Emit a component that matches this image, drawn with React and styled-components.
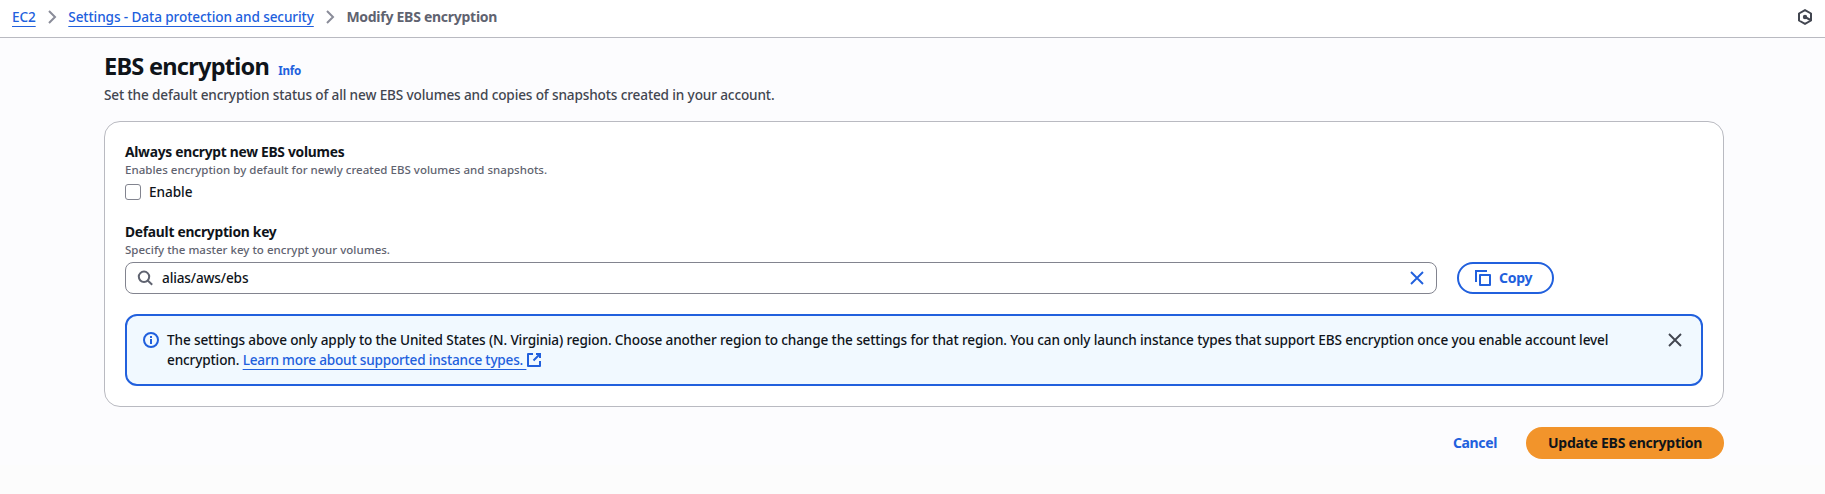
import React, { useState } from "react";
import styled, { createGlobalStyle } from "styled-components";

const color = {
  link: "#2160dd",
  text: "#0f141a",
  muted: "#5f6370",
  body: "#424650",
  line: "#b9bac1",
  control: "#82848f",
};

const GlobalStyle = createGlobalStyle`
  *, *::before, *::after { box-sizing: border-box; }
  body {
    margin: 0;
    background: #fcfcfc;
    color: ${color.text};
    font: 500 13.6px/20px "Noto Sans", "Open Sans", sans-serif;
    letter-spacing: -0.138px;
    overflow: hidden;
  }
  button, input { font: inherit; letter-spacing: inherit; color: inherit; }
`;

const TopBar = styled.header`
  height: 38px;
  padding: 7px 12px 0;
  display: flex;
  justify-content: space-between;
  background: #fff;
  border-bottom: 1px solid ${color.line};
`;

const Breadcrumbs = styled.nav`
  display: flex;
  height: 20px;
  white-space: nowrap;
`;

const Link = styled.a`
  color: ${color.link};
  text-decoration: underline 1px;
  text-underline-offset: 4px;
  text-decoration-skip-ink: none;
  letter-spacing: ${(p) => p.$track || "-0.1px"};
`;

const Separator = styled.svg`
  flex: none;
  width: 16px;
  height: 16px;
  margin: 2px 8.3px 0;
`;

const Current = styled.span`
  font-size: 14px;
  font-weight: 700;
  color: ${color.muted};
  letter-spacing: -0.27px;
`;

const IconButton = styled.button`
  flex: none;
  width: 16px;
  height: 16px;
  padding: 0;
  border: 0;
  background: none;
  display: flex;
  color: ${(p) => p.$color || color.body};
  margin-top: ${(p) => p.$top || "0"};
`;

const Main = styled.main`
  height: 427px;
  padding: 13px 101px 0 104px;
  background: #fcfcfe;
`;

const Heading = styled.div`
  display: flex;
  align-items: baseline;
  height: 30px;
  gap: 9px;
`;

const Title = styled.h1`
  margin: 0;
  font-size: 23.6px;
  line-height: 30px;
  font-weight: 700;
  letter-spacing: -0.77px;
`;

const Info = styled.a`
  font-size: 11.6px;
  line-height: 16px;
  font-weight: 700;
  letter-spacing: -0.2px;
  color: ${color.link};
`;

const Subtitle = styled.p`
  margin: 4px 0 16px;
  color: ${color.body};
`;

const Card = styled.section`
  height: 286px;
  padding: 20px;
  display: flex;
  flex-direction: column;
  gap: 20px;
  background: #fff;
  border: 1px solid ${color.line};
  border-radius: 16px;
`;

const Field = styled.div`
  display: flex;
  flex-direction: column;
`;

const Label = styled.div`
  font-size: 13.8px;
  font-weight: 700;
  letter-spacing: -0.27px;
`;

const Hint = styled.div`
  margin-bottom: 4px;
  font-size: 11.5px;
  line-height: 16px;
  letter-spacing: 0.02px;
  color: ${color.muted};
`;

const CheckRow = styled.label`
  display: flex;
  gap: 8px;
  letter-spacing: -0.05px;
`;

const Checkbox = styled.input`
  appearance: none;
  width: 16px;
  height: 16px;
  margin: 2px 0 0;
  background: #fff;
  border: 1px solid ${color.control};
  border-radius: 3px;
`;

const KeyRow = styled.div`
  display: flex;
  gap: 20px;
`;

const SearchBox = styled.div`
  width: 1312px;
  height: 32px;
  padding: 0 11px;
  display: flex;
  align-items: center;
  gap: 9px;
  border: 1px solid ${color.control};
  border-radius: 8px;
`;

const SearchInput = styled.input`
  flex: 1;
  height: 20px;
  padding: 0;
  border: 0;
  outline: 0;
  background: none;
`;

const Button = styled.button`
  height: 32px;
  width: ${(p) => p.$width};
  padding: ${(p) => p.$pad || "0"};
  display: flex;
  align-items: center;
  justify-content: ${(p) => (p.$pad ? "flex-start" : "center")};
  gap: 8px;
  font-size: 14px;
  font-weight: 700;
  white-space: nowrap;
  border-radius: 20px;
  letter-spacing: ${(p) => p.$track || "-0.3px"};
  border: 2px solid ${(p) => (p.$kind === "normal" ? color.link : "transparent")};
  color: ${(p) => (p.$kind === "primary" ? color.text : color.link)};
  background: ${(p) => (p.$kind === "primary" ? "#f2942b" : "transparent")};
`;

const Alert = styled.div`
  height: 72px;
  padding: 14px 18px 14px 16px;
  display: flex;
  gap: 8px;
  background: #f1f9ff;
  border: 2px solid ${color.link};
  border-radius: 12px;
`;

const AlertIcon = styled.svg`
  flex: none;
  width: 16px;
  height: 16px;
  margin-top: 2px;
`;

const AlertText = styled.div`
  flex: 1;
`;

const ExternalIcon = styled.svg`
  width: 16px;
  height: 16px;
  vertical-align: -3px;
`;

const Footer = styled.footer`
  margin-top: 20px;
  display: flex;
  justify-content: flex-end;
  gap: 8px;
`;

const Chevron = () => (
  <Separator viewBox="0 0 16 16" fill="none" stroke="#8a8c99" strokeWidth="2">
    <path d="M5 2l6 6-6 6" />
  </Separator>
);

const Cross = () => (
  <svg width="16" height="16" viewBox="0 0 16 16" fill="none" stroke="currentColor" strokeWidth="1.9">
    <path d="M2 2l12 12M14 2L2 14" />
  </svg>
);

export default function App() {
  const [value, setValue] = useState("alias/aws/ebs");
  return (
    <>
      <GlobalStyle />
      <TopBar>
        <Breadcrumbs>
          <Link>EC2</Link>
          <Chevron />
          <Link>Settings - Data protection and security</Link>
          <Chevron />
          <Current>Modify EBS encryption</Current>
        </Breadcrumbs>
        <IconButton $top="2px" aria-label="Tools">
          <svg width="16" height="16" viewBox="0 0 16 16" fill="none" stroke="currentColor" strokeWidth="2">
            <path d="M8 1.1l6 3.4v7L8 14.9l-6-3.4v-7z" strokeLinejoin="round" />
            <circle cx="8" cy="8" r="2.2" fill="currentColor" stroke="none" />
            <path d="M8 8l5.5 3" />
          </svg>
        </IconButton>
      </TopBar>
      <Main>
        <Heading>
          <Title>EBS encryption</Title>
          <Info>Info</Info>
        </Heading>
        <Subtitle>
          Set the default encryption status of all new EBS volumes and copies of snapshots created in your account.
        </Subtitle>
        <Card>
          <Field>
            <Label>Always encrypt new EBS volumes</Label>
            <Hint>Enables encryption by default for newly created EBS volumes and snapshots.</Hint>
            <CheckRow>
              <Checkbox type="checkbox" />
              Enable
            </CheckRow>
          </Field>
          <Field>
            <Label>Default encryption key</Label>
            <Hint>Specify the master key to encrypt your volumes.</Hint>
            <KeyRow>
              <SearchBox>
                <svg width="16" height="16" viewBox="0 0 16 16" fill="none" stroke={color.muted} strokeWidth="2">
                  <circle cx="7" cy="6.800" r="5.200" />
                  <path d="M10.700 10.500l4.500 4.300" />
                </svg>
                <SearchInput value={value} onChange={(e) => setValue(e.target.value)} />
                <IconButton $color={color.link} aria-label="Clear" onClick={() => setValue("")}>
                  <Cross />
                </IconButton>
              </SearchBox>
              <Button $kind="normal" $width="97px" $pad="0 0 0 16px">
                <svg width="16" height="16" viewBox="0 0 16 16" fill="none" stroke="currentColor" strokeWidth="2">
                  <path d="M5 5h10v10H5z" strokeLinejoin="round" />
                  <path d="M1 12V1h11" />
                </svg>
                Copy
              </Button>
            </KeyRow>
          </Field>
          <Alert>
            <AlertIcon viewBox="0 0 16 16" fill="none" stroke={color.link} strokeWidth="2">
              <circle cx="8" cy="8" r="7" />
              <path d="M8 7v5M8 4v2" />
            </AlertIcon>
            <AlertText>
              The settings above only apply to the United States (N. Virginia) region. Choose another region to change
              the settings for that region. You can only launch instance types that support EBS encryption once you
              enable account level
              <br />
              encryption. <Link $track="-0.195px">Learn more about supported instance types.&nbsp;</Link>
              <ExternalIcon viewBox="0 0 16 16" fill="none" stroke={color.link} strokeWidth="2">
                <path d="M7 2H2v12h12V9" strokeLinejoin="round" />
                <path d="M10 2h4v4M14 2L7.500 8.500" />
              </ExternalIcon>
            </AlertText>
            <IconButton $top="2px" aria-label="Dismiss">
              <Cross />
            </IconButton>
          </Alert>
        </Card>
        <Footer>
          <Button $kind="link" $width="86px" $track="-0.37px">
            Cancel
          </Button>
          <Button $kind="primary" $width="198px" $track="-0.24px">
            Update EBS encryption
          </Button>
        </Footer>
      </Main>
    </>
  );
}
